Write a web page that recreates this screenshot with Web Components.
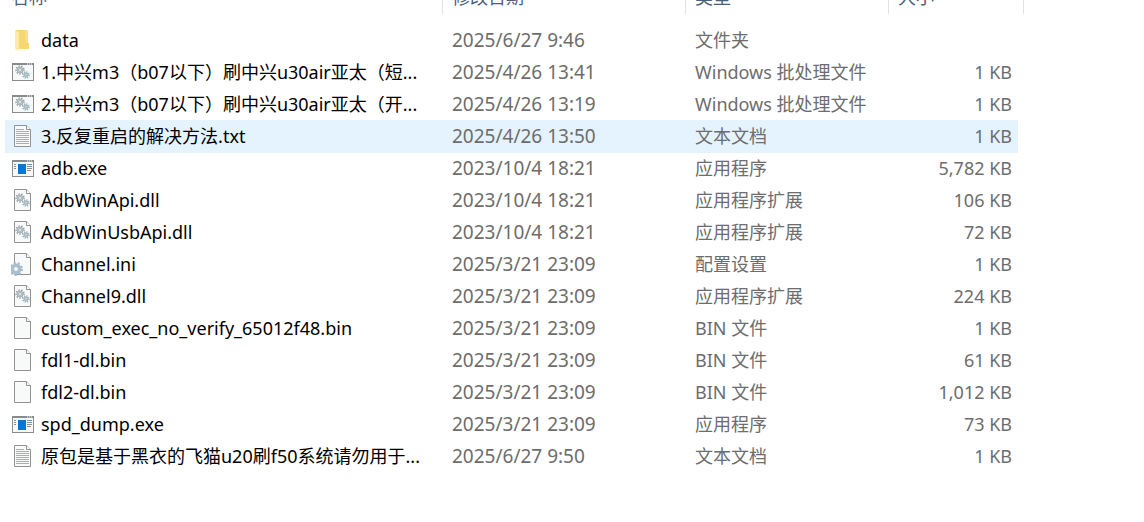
<!DOCTYPE html>
<html lang="zh-CN">
<head>
<meta charset="utf-8">
<title>文件列表</title>
<style>
body { margin: 0; background: #fff; font-family: "Noto Sans", "Noto Sans CJK SC", sans-serif; font-size: 18px; color: #000; }
</style>
</head>
<body>
<file-list></file-list>

<template id="icon-template">
  <style>
    :host { display: block; width: 24px; height: 32px; flex: none; }
    svg { display: block; }
  </style>
  <svg width="24" height="32" viewBox="0 0 24 32" aria-hidden="true"></svg>
</template>

<template id="list-template">
  <style>
    :host { display: block; padding: 0 120px 0 5px; }
    table { width: 100%; table-layout: fixed; border-collapse: separate; border-spacing: 0; }
    .date { width: 243px; }
    .type { width: 203px; }
    .size { width: 129px; }
    .edge { width: 6px; }
    th { padding: 0 0 10px; text-align: left; font-weight: 400; color: #4c607a; }
    th div { display: flex; align-items: flex-end; height: 14px; line-height: 34px; overflow: hidden; padding-left: 9px; border-right: 1px solid #e2e2e2; }
    th:first-child div { padding-left: 6px; }
    td { height: 32px; line-height: 32px; padding: 0 0 0 9px; color: #6d6d6d; white-space: nowrap; }
    td.name { padding-left: 6px; color: #000; }
    td.name div { display: flex; gap: 6px; height: 32px; }
    td.modified { font-size: 19px; }
    td.amount { text-align: right; padding-right: 6px; }
    tr.hover td:not(.spare) { background: #e5f3ff; box-shadow: 0 1px 0 #e5f3ff; }
    td.spare { padding: 0; }
  </style>
  <table>
    <colgroup><col><col class="date"><col class="type"><col class="size"><col class="edge"></colgroup>
    <thead>
      <tr>
        <th scope="col"><div>名称</div></th>
        <th scope="col"><div>修改日期</div></th>
        <th scope="col"><div>类型</div></th>
        <th scope="col" colspan="2"><div>大小</div></th>
      </tr>
    </thead>
    <tbody></tbody>
  </table>
</template>

<script>
const smallGear = (cx, cy, r, teeth, color) =>
  `<circle cx="${cx}" cy="${cy}" r="${r}" fill="none" stroke="${color}" stroke-width="1.4" stroke-dasharray="${(Math.PI * r / teeth).toFixed(3)}"/>
   <circle cx="${cx}" cy="${cy}" r="${r - 1}" fill="#c5ced4" stroke="${color}" stroke-width=".7"/>
   <circle cx="${cx}" cy="${cy}" r="${r * .35}" fill="#fff" stroke="${color}" stroke-width=".7"/>`;

const gears = (x, y) => smallGear(x, y, 4, 9, '#929ca3') + smallGear(x + 6, y + 5, 3, 8, '#8fa8b3');

const page =
  `<path d="M3.5 5.5H15.5L19.5 9.5V26.5H3.5Z" fill="#f8f9f9" stroke="#929292"/>
   <path d="M15.5 5.5V9.5H19.5" fill="#fff" stroke="#929292"/>`;

const frame = top =>
  `<rect x="1.5" y="${top + .5}" width="21" height="${24 - top}" fill="#f7f8f8" stroke="#898c8f"/>
   <path d="M1 ${top + 1}H23" stroke="#898c8f" stroke-width="2"/>
   <path d="M16 ${top + 1}h1M18 ${top + 1}h1M20 ${top + 1}h1" stroke="#fff"/>`;

const drawings = {
  folder:
    `<path d="M5 6H17V19H18V25H7Z" fill="#f7d774"/>
     <path d="M14 6H17V19H15Z" fill="#fbdf83"/>
     <path d="M4 6L8 9V27L4 25Z" fill="#ffeaa5"/>`,
  batch: frame(7) + gears(9, 14),
  text: page + `<path d="M5 9.5h8M5 11.5h13M5 13.5h13M5 15.5h13M5 17.5h13M5 19.5h13M5 21.5h13M5 23.5h13" stroke="#adadad"/>`,
  app: frame(8) +
    `<rect x="7" y="12" width="8" height="10" fill="#0078d7"/>
     <path d="M3 12.5h2M3 14.5h2M3 16.5h2M16 12.5h5M16 14.5h5M16 16.5h5M16 18.5h4" stroke="#8d8d8d"/>`,
  library: page + gears(9, 14),
  config: page +
    `<circle cx="5" cy="21" r="6" fill="none" stroke="#a3b8c6" stroke-width="2" stroke-dasharray="2.094"/>
     <circle cx="5" cy="21" r="4" fill="#fff" stroke="#a9bfcd" stroke-width="3"/>
     <circle cx="5" cy="21" r="2.5" fill="#f4f8fa" stroke="#8ca2b1" stroke-width=".7"/>`,
  blank: page
};

const files = [
  ['folder', 'data', '2025/6/27 9:46', '文件夹', ''],
  ['batch', '1.中兴m3（b07以下）刷中兴u30air亚太（短...', '2025/4/26 13:41', 'Windows 批处理文件', '1 KB'],
  ['batch', '2.中兴m3（b07以下）刷中兴u30air亚太（开...', '2025/4/26 13:19', 'Windows 批处理文件', '1 KB'],
  ['text', '3.反复重启的解决方法.txt', '2025/4/26 13:50', '文本文档', '1 KB', true],
  ['app', 'adb.exe', '2023/10/4 18:21', '应用程序', '5,782 KB'],
  ['library', 'AdbWinApi.dll', '2023/10/4 18:21', '应用程序扩展', '106 KB'],
  ['library', 'AdbWinUsbApi.dll', '2023/10/4 18:21', '应用程序扩展', '72 KB'],
  ['config', 'Channel.ini', '2025/3/21 23:09', '配置设置', '1 KB'],
  ['library', 'Channel9.dll', '2025/3/21 23:09', '应用程序扩展', '224 KB'],
  ['blank', 'custom_exec_no_verify_65012f48.bin', '2025/3/21 23:09', 'BIN 文件', '1 KB'],
  ['blank', 'fdl1-dl.bin', '2025/3/21 23:09', 'BIN 文件', '61 KB'],
  ['blank', 'fdl2-dl.bin', '2025/3/21 23:09', 'BIN 文件', '1,012 KB'],
  ['app', 'spd_dump.exe', '2025/3/21 23:09', '应用程序', '73 KB'],
  ['text', '原包是基于黑衣的飞猫u20刷f50系统请勿用于...', '2025/6/27 9:50', '文本文档', '1 KB']
];

customElements.define('file-icon', class extends HTMLElement {
  constructor() {
    super();
    this.attachShadow({ mode: 'open' })
      .append(document.getElementById('icon-template').content.cloneNode(true));
  }
  static get observedAttributes() { return ['kind']; }
  attributeChangedCallback(name, old, kind) {
    this.shadowRoot.querySelector('svg').innerHTML = drawings[kind] || drawings.blank;
  }
});

customElements.define('file-list', class extends HTMLElement {
  constructor() {
    super();
    this.attachShadow({ mode: 'open' })
      .append(document.getElementById('list-template').content.cloneNode(true));
    this.shadowRoot.querySelector('tbody').innerHTML = files.map(([kind, name, modified, type, size, hover]) =>
      `<tr${hover ? ' class="hover"' : ''}>
        <td class="name"><div><file-icon kind="${kind}"></file-icon><span>${name}</span></div></td>
        <td class="modified">${modified}</td>
        <td>${type}</td>
        <td class="amount">${size}</td>
        <td class="spare"></td>
      </tr>`).join('');
  }
});
</script>
</body>
</html>
